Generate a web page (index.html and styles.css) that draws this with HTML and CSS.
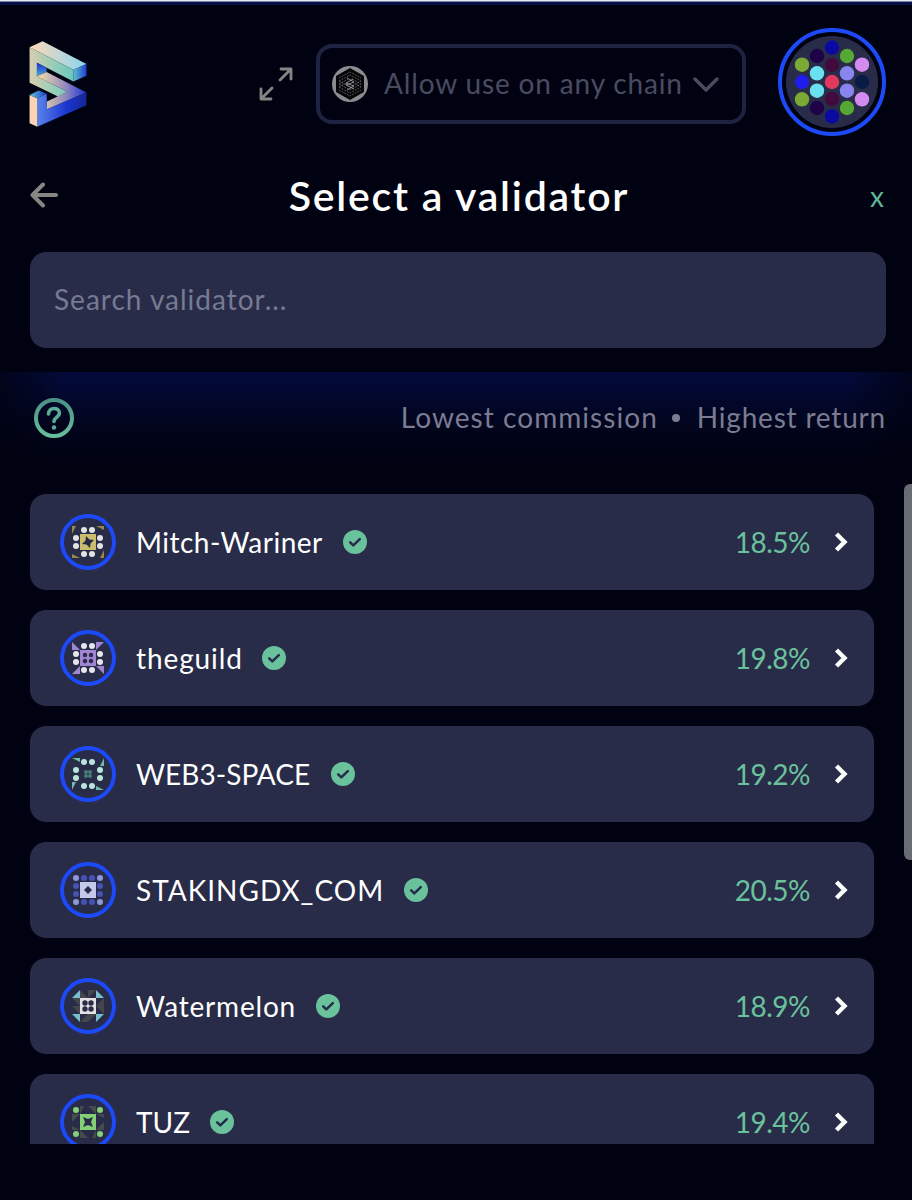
FILE: index.html
```
<!DOCTYPE html>
<html lang="en">
<head>
<meta charset="utf-8">
<title>Select a validator</title>
<link rel="stylesheet" href="styles.css">
</head>
<body>
<svg class="defs" width="0" height="0" aria-hidden="true">
  <defs>
    <symbol id="check" viewBox="0 0 24 24"><circle cx="12" cy="12" r="12" fill="#6ac29c"/><path d="M7.200 12.400l3.100 3 6.500-6.200" fill="none" stroke="#262b49" stroke-width="2.500" stroke-linecap="round" stroke-linejoin="round"/></symbol>
    <symbol id="chevron" viewBox="0 0 14 20"><path d="M2.500 2l8 8-8 8" fill="none" stroke="#fff" stroke-width="4.400"/></symbol>
  </defs>
</svg>
<main class="app">
  <header class="header">
    <svg class="logo" viewBox="27 19 172 257">
      <defs>
        <linearGradient id="top"><stop stop-color="#ffd9b8"/><stop offset="1" stop-color="#8bd5ee"/></linearGradient>
        <linearGradient id="front"><stop stop-color="#d8cdb0"/><stop offset=".5" stop-color="#9dcdb8"/><stop offset="1" stop-color="#69c7c0"/></linearGradient>
        <linearGradient id="end"><stop stop-color="#5fc0d0"/><stop offset="1" stop-color="#1d3fd0"/></linearGradient>
        <linearGradient id="hole" x2="0" y2="1"><stop stop-color="#1631d4"/><stop offset="1" stop-color="#4aa5d4"/></linearGradient>
        <linearGradient id="diag"><stop stop-color="#f8dfa8"/><stop offset=".6" stop-color="#8c86bd"/><stop offset="1" stop-color="#1c31d6"/></linearGradient>
        <linearGradient id="base"><stop stop-color="#5a83ec"/><stop offset=".6" stop-color="#1b35d0"/><stop offset="1" stop-color="#152696"/></linearGradient>
      </defs>
      <path fill="url(#top)" d="M28 38L67 20 198 88 159 105z"/>
      <path fill="url(#front)" d="M28 38L159 105V140L50 84V124L141 171 113 185 28 144z"/>
      <path fill="url(#end)" d="M159 105L198 88V123L159 140z"/>
      <path fill="url(#hole)" d="M50 84L79 100V112L50 124z"/>
      <path fill="url(#diag)" d="M50 124L79 112 198 173 80 223V200L141 171z"/>
      <path fill="url(#base)" d="M51 190L79 177 80 223 198 173V211L51 275z"/>
      <path fill="#fbd4b7" d="M28 180L51 190V275L28 265z"/>
      <path fill="url(#end)" d="M28 180L55 167 79 177 51 190z"/>
    </svg>
    <svg class="expand" viewBox="0 0 34 34"><path d="M21 13L32 2M22 2h10v10M13 21L2 32M2 22v10h10" fill="none" stroke="#858585" stroke-width="2.800" stroke-linecap="round" stroke-linejoin="round"/></svg>
    <div class="chain">
      <svg class="chain-icon" viewBox="0 0 36 36">
        <circle cx="18" cy="18" r="18" fill="#8c8c8f"/><path d="M18 2L32 10V26L18 34 4 26V10z" fill="#050508"/>
        <g fill="none" stroke="#606064" stroke-width=".9" stroke-dasharray="2 1"><path d="M7 12l11-6 11 6M7 15l11-6 11 6M7 18l9-5M20 13l9 5M7 21l9-5M20 16l9 5M7 15l11 6 11-6M7 18l11 6 11-6M7 21l11 6 11-6M7 24l11 6 11-6"/></g>
        <path d="M15 12l7 4-8 3 8 4M21 13l-7 4 8 3-7 4" fill="none" stroke="#aaa" stroke-width=".8"/>
      </svg>
      <span class="chain-text">Allow use on any chain</span>
      <svg class="chain-arrow" viewBox="0 0 26 16"><path d="M2 2l11 11L24 2" fill="none" stroke="#4a4b60" stroke-width="3.400" stroke-linecap="round" stroke-linejoin="round"/></svg>
    </div>
    <svg class="account" viewBox="0 0 108 108">
      <circle cx="54" cy="54" r="52" fill="#000211" stroke="#1c4af8" stroke-width="4"/><circle cx="54" cy="54" r="46" fill="#282c48"/>
      <g fill="#0a0aa3"><circle cx="54" cy="19.500" r="7.200"/><circle cx="54" cy="88.500" r="7.200"/></g>
      <g fill="#1e0347"><circle cx="39" cy="28" r="7.200"/><circle cx="39" cy="80" r="7.200"/></g>
      <g fill="#56a733"><circle cx="69" cy="28" r="7.200"/><circle cx="69" cy="80" r="7.200"/></g>
      <g fill="#420b3d"><circle cx="54" cy="37" r="7.200"/><circle cx="54" cy="71" r="7.200"/></g>
      <g fill="#7aa934"><circle cx="24" cy="36.700" r="7.200"/><circle cx="24" cy="71.300" r="7.200"/></g>
      <g fill="#d48bf0"><circle cx="84" cy="36.700" r="7.200"/><circle cx="84" cy="71.300" r="7.200"/></g>
      <g fill="#6be0f0"><circle cx="39" cy="45.300" r="7.200"/><circle cx="39" cy="62.700" r="7.200"/></g>
      <g fill="#8985ee"><circle cx="69" cy="45.300" r="7.200"/><circle cx="69" cy="62.700" r="7.200"/></g>
      <circle cx="24" cy="54" r="7.200" fill="#1e1deb"/><circle cx="84" cy="54" r="7.200" fill="#0a1b45"/><circle cx="54" cy="54" r="7.200" fill="#e1395e"/>
    </svg>
  </header>
  <div class="title-row">
    <svg class="back" viewBox="0 0 28 26"><path d="M13 2.500L2.500 13 13 23.500M3 13h23" fill="none" stroke="#888582" stroke-width="4" stroke-linecap="round" stroke-linejoin="round"/></svg>
    <h1 class="title">Select a validator</h1>
    <span class="close">x</span>
  </div>
  <div class="search">Search validator...</div>
  <section class="body">
    <div class="sort-row">
      <svg class="help" viewBox="0 0 40 40"><defs><linearGradient id="helpTone" x2="0" y2="1"><stop stop-color="#4b9187"/><stop offset="1" stop-color="#67bd9b"/></linearGradient></defs><circle cx="20" cy="20" r="18" fill="none" stroke="url(#helpTone)" stroke-width="4"/><path d="M14.500 16c0-7.500 11-7 11-1 0 4-5.500 4.200-5.500 8.500" fill="none" stroke="#5aad94" stroke-width="3.600" stroke-linecap="round"/><circle cx="20" cy="29.500" r="2.200" fill="#5aad94"/></svg>
      <span class="sort lowest">Lowest commission</span><i class="dot"></i><span class="sort highest">Highest return</span>
    </div>
    <div class="list">
      <article class="card">
        <svg class="avatar" viewBox="-12 -12 56 56"><circle class="ring" cx="16" cy="16" r="26"/>
          <path fill="#958848" d="M0 0h4L0 8zM24 0h8v4zM32 24v8h-4zM0 28l8 4H0z"/>
          <g fill="#e3e3e3"><circle cx="12" cy="4" r="3"/><circle cx="20" cy="4" r="3"/><circle cx="12" cy="28" r="3"/><circle cx="20" cy="28" r="3"/><circle cx="4" cy="12" r="3"/><circle cx="4" cy="20" r="3"/><circle cx="28" cy="12" r="3"/><circle cx="28" cy="20" r="3"/></g>
          <path fill="#cabd6d" d="M8 8h16v16H8z"/><path fill="#282c48" d="M14 10l3.500 3.500L22 14l-3.500 3.500L18 22l-3.500-3.500L10 18l3.500-3.500z"/></svg>
        <span class="name mitch">Mitch-Wariner</span><svg class="check"><use href="#check"/></svg>
        <span class="rate">18.5%</span><svg class="chevron"><use href="#chevron"/></svg>
      </article>
      <article class="card">
        <svg class="avatar" viewBox="-12 -12 56 56"><circle class="ring" cx="16" cy="16" r="26"/>
          <path fill="#a085d3" d="M0 0l8 8H0zM24 0h8l-8 8zM24 24h8v8zM8 24v8H0zM8 8h16v16H8z"/>
          <g fill="#e6e6ea"><circle cx="12" cy="4" r="3"/><circle cx="20" cy="4" r="3"/><circle cx="12" cy="28" r="3"/><circle cx="20" cy="28" r="3"/><circle cx="4" cy="12" r="3"/><circle cx="4" cy="20" r="3"/><circle cx="28" cy="12" r="3"/><circle cx="28" cy="20" r="3"/></g>
          <g fill="#282c48"><circle cx="13" cy="13" r="2.200"/><circle cx="19" cy="13" r="2.200"/><circle cx="13" cy="19" r="2.200"/><circle cx="19" cy="19" r="2.200"/></g></svg>
        <span class="name guild">theguild</span><svg class="check"><use href="#check"/></svg>
        <span class="rate">19.8%</span><svg class="chevron"><use href="#chevron"/></svg>
      </article>
      <article class="card">
        <svg class="avatar" viewBox="-12 -12 56 56"><circle class="ring" cx="16" cy="16" r="26"/>
          <path fill="#70bba8" d="M0 0h8v4zM32 0v8h-4zM0 24h4l-4 8zM24 28l8 4h-8z"/>
          <g fill="#b9e5da"><circle cx="12" cy="4" r="3"/><circle cx="20" cy="4" r="3"/><circle cx="12" cy="28" r="3"/><circle cx="20" cy="28" r="3"/><circle cx="4" cy="12" r="3"/><circle cx="4" cy="20" r="3"/><circle cx="28" cy="12" r="3"/><circle cx="28" cy="20" r="3"/></g>
          <g fill="#417e75"><circle cx="14" cy="14" r="2"/><circle cx="18" cy="14" r="2"/><circle cx="14" cy="18" r="2"/><circle cx="18" cy="18" r="2"/></g></svg>
        <span class="name web">WEB3-SPACE</span><svg class="check"><use href="#check"/></svg>
        <span class="rate">19.2%</span><svg class="chevron"><use href="#chevron"/></svg>
      </article>
      <article class="card">
        <svg class="avatar" viewBox="-12 -12 56 56"><circle class="ring" cx="16" cy="16" r="26"/>
          <g fill="#8d98da"><circle cx="4" cy="4" r="3"/><circle cx="28" cy="4" r="3"/><circle cx="4" cy="28" r="3"/><circle cx="28" cy="28" r="3"/></g>
          <g fill="#4652b4"><circle cx="12" cy="4" r="3"/><circle cx="20" cy="4" r="3"/><circle cx="12" cy="28" r="3"/><circle cx="20" cy="28" r="3"/><circle cx="4" cy="12" r="3"/><circle cx="4" cy="20" r="3"/><circle cx="28" cy="12" r="3"/><circle cx="28" cy="20" r="3"/></g>
          <path fill="#c3c8e9" d="M8 8h16v16H8z"/><path fill="#282c48" d="M16 12l4 4-4 4-4-4z"/></svg>
        <span class="name staking">STAKINGDX_COM</span><svg class="check"><use href="#check"/></svg>
        <span class="rate">20.5%</span><svg class="chevron"><use href="#chevron"/></svg>
      </article>
      <article class="card">
        <svg class="avatar" viewBox="-12 -12 56 56"><circle class="ring" cx="16" cy="16" r="26"/>
          <path fill="#79bfd0" d="M8 0v8H0zM24 0l8 8h-8zM0 24h8v8zM24 24h8l-8 8z"/>
          <path fill="#454649" d="M8 0l8 8H8zM16 0h8l-8 8zM24 16l8-8v8zM24 16h8v8zM16 24h8l-8 8zM16 24v8H8zM8 16v8l-8-8zM0 8h8v8z"/>
          <path fill="#e2e2e4" d="M8 8h16v16H8z"/><g fill="#282c48"><circle cx="13" cy="13" r="2.700"/><circle cx="19" cy="13" r="2.700"/><circle cx="13" cy="19" r="2.700"/><circle cx="19" cy="19" r="2.700"/></g></svg>
        <span class="name melon">Watermelon</span><svg class="check"><use href="#check"/></svg>
        <span class="rate">18.9%</span><svg class="chevron"><use href="#chevron"/></svg>
      </article>
      <article class="card">
        <svg class="avatar" viewBox="-12 -12 56 56"><circle class="ring" cx="16" cy="16" r="26"/>
          <path fill="#484b4b" d="M8 0h4l-4 8zM16 0h8v8zM32 8v4l-8-4zM32 16v8h-8zM24 32h-4l4-8zM8 24l8 8H8zM0 24v-4l8 4zM0 8h8l-8 8z"/>
          <g fill="#84d076"><circle cx="4" cy="4" r="3"/><circle cx="28" cy="4" r="3"/><circle cx="4" cy="28" r="3"/><circle cx="28" cy="28" r="3"/><path d="M8 8h16v16H8z"/></g><path fill="#282c48" d="M11 11l5 2 5-2-2 5 2 5-5-2-5 2 2-5z"/></svg>
        <span class="name tuz">TUZ</span><svg class="check"><use href="#check"/></svg>
        <span class="rate">19.4%</span><svg class="chevron"><use href="#chevron"/></svg>
      </article>
    </div>
  </section>
  <div class="thumb"></div>
</main>
</body>
</html>
```
FILE: styles.css
```
* { box-sizing: border-box; }
body { margin: 0; background: #000211; font-family: Lato, sans-serif; font-size: 28px; line-height: 36px; color: #fff; }
svg { display: block; flex: none; }
.defs { position: absolute; }
.app { position: relative; width: 912px; height: 1200px; overflow: hidden; border-top: 1px solid #e8eaf0; }
.app::before { content: ""; display: block; height: 3px; background: #06114a; border-top: 1px solid #7d86aa; }
.header { display: flex; align-items: center; height: 154px; padding: 0 26px 0 29px; }
.logo { width: 58px; height: 86px; margin-top: 4px; }
.expand { width: 34px; height: 34px; margin: 4px 0 0 172px; }
.chain { display: flex; align-items: center; width: 430px; height: 80px; margin: 4px 0 0 23px; padding-left: 12px; border: 4px solid #1e2341; border-radius: 16px; color: #4a4b60; white-space: nowrap; }
.chain-icon { width: 36px; height: 36px; }
.chain-text { width: 300px; margin: 0 9px 2px 16px; letter-spacing: 0.85px; }
.chain-arrow { width: 26px; height: 16px; margin-top: 2px; }
.account { width: 108px; height: 108px; margin-left: 32px; }
.title-row { display: flex; align-items: center; height: 72px; margin-top: 1px; padding: 0 26px 0 30px; }
.back { width: 28px; height: 26px; margin-bottom: 2px; }
.title { flex: 1; margin: 0; padding-right: 8px; text-align: center; font-size: 41px; line-height: 48px; font-weight: 600; letter-spacing: 1.75px; }
.close { width: 18px; text-align: center; color: #5fb595; }
.search { height: 96px; margin: 20px 26px 24px 30px; padding: 29px 24px 31px; border-radius: 16px; background: #282c48; color: #777a91; letter-spacing: 1px; }
.body { padding: 26px 26px 0 30px; background: linear-gradient(90deg, #000211c0, #00021100 7%, #00021100 93%, #000211c0), linear-gradient(#030a3a, #02072a 30px, #010419 60px, #000211 96px); }
.sort-row { display: flex; align-items: center; height: 40px; padding-left: 4px; color: #7b7c91; white-space: nowrap; }
.sort { margin-bottom: 2px; }
.help { width: 40px; height: 40px; margin-right: auto; }
.lowest { letter-spacing: 1.05px; }
.dot { width: 8px; height: 8px; margin: 0 17px 0 14px; border-radius: 50%; background: #7b7c91; }
.highest { letter-spacing: 0.8px; }
.list { display: flex; flex-direction: column; gap: 20px; height: 650px; margin-top: 56px; overflow: hidden; }
.card { display: flex; align-items: center; flex: none; width: 844px; height: 96px; padding: 0 26px 0 30px; border-radius: 16px; background: #282c48; }
.avatar { width: 56px; height: 56px; margin-right: 20px; }
.ring { fill: none; stroke: #1c4af8; stroke-width: 4; }
.name { margin-bottom: 1px; white-space: nowrap; }
.mitch { width: 187px; letter-spacing: 0.5px; }
.guild { width: 106px; letter-spacing: 0.9px; }
.web { width: 175px; letter-spacing: 0.05px; }
.staking { width: 248px; letter-spacing: 1px; }
.melon { width: 160px; letter-spacing: 0.8px; }
.tuz { width: 54px; letter-spacing: 0; }
.check { width: 24px; height: 24px; margin-left: 20px; }
.rate { margin: 0 0 1px auto; color: #6ac29c; letter-spacing: -0.5px; }
.chevron { width: 14px; height: 20px; margin-left: 24px; }
.thumb { position: absolute; top: 483px; right: 0; width: 8px; height: 376px; border-radius: 6px 0 0 6px; background: #686d73; }
```
